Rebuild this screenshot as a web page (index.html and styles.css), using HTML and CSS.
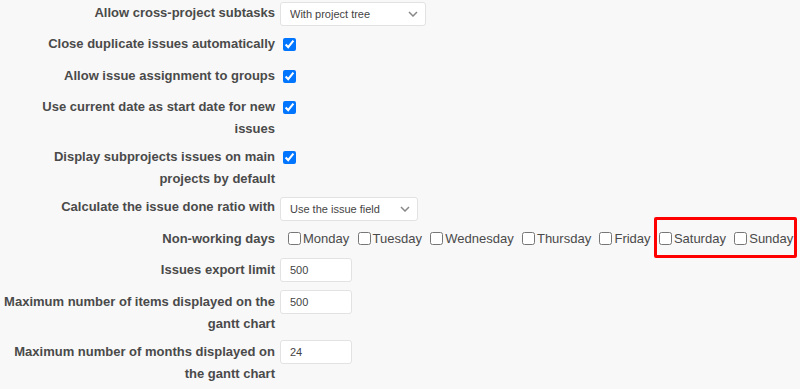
FILE: index.html
```html
<!DOCTYPE html>
<html>
<head>
<meta charset="utf-8">
<link rel="stylesheet" href="styles.css">
</head>
<body>
<div class="tabular">
  <div class="row">
    <label class="lbl">Allow cross-project subtasks</label>
    <div class="ctl"><span class="sel w146"><select><option>With project tree</option></select><svg class="chev" width="10" height="6" viewBox="0 0 10 6"><path d="M1 1l4 4 4-4" fill="none" stroke="#888" stroke-width="1.5"/></svg></span></div>
  </div>
  <div class="row">
    <label class="lbl">Close duplicate issues automatically</label>
    <div class="ctl"><input type="checkbox" class="cb" checked></div>
  </div>
  <div class="row">
    <label class="lbl">Allow issue assignment to groups</label>
    <div class="ctl"><input type="checkbox" class="cb" checked></div>
  </div>
  <div class="row">
    <label class="lbl">Use current date as start date for new issues</label>
    <div class="ctl"><input type="checkbox" class="cb" checked></div>
  </div>
  <div class="row">
    <label class="lbl">Display subprojects issues on main projects by default</label>
    <div class="ctl"><input type="checkbox" class="cb" checked></div>
  </div>
  <div class="row">
    <label class="lbl">Calculate the issue done ratio with</label>
    <div class="ctl"><span class="sel w138"><select><option>Use the issue field</option></select><svg class="chev" width="10" height="6" viewBox="0 0 10 6"><path d="M1 1l4 4 4-4" fill="none" stroke="#888" stroke-width="1.5"/></svg></span></div>
  </div>
  <div class="row">
    <label class="lbl">Non-working days</label>
    <div class="ctl days">
      <label class="day"><input type="checkbox">Monday</label>
      <label class="day"><input type="checkbox">Tuesday</label>
      <label class="day"><input type="checkbox">Wednesday</label>
      <label class="day"><input type="checkbox">Thursday</label>
      <label class="day"><input type="checkbox">Friday</label>
      <span class="hl">
        <label class="day"><input type="checkbox">Saturday</label>
        <label class="day last"><input type="checkbox">Sunday</label>
      </span>
    </div>
  </div>
  <div class="row">
    <label class="lbl">Issues export limit</label>
    <div class="ctl"><input type="text" class="txt" value="500"></div>
  </div>
  <div class="row">
    <label class="lbl">Maximum number of items displayed on the gantt chart</label>
    <div class="ctl"><input type="text" class="txt" value="500"></div>
  </div>
  <div class="row">
    <label class="lbl">Maximum number of months displayed on the gantt chart</label>
    <div class="ctl"><input type="text" class="txt" value="24"></div>
  </div>
</div>
</body>
</html>
```
FILE: styles.css
```css
html, body {
  margin: 0;
  padding: 0;
  background: #f8f8f8;
}
body {
  font-family: "Liberation Sans", Arial, sans-serif;
  font-size: 13px;
  color: #4a4a4a;
  overflow: hidden;
}
.tabular {
  margin-top: -1.5px;
}
.row {
  display: grid;
  grid-template-columns: 275px 1fr;
  column-gap: 5px;
  padding: 3px 0;
  min-height: 25.5px;
}
.lbl {
  font-weight: bold;
  text-align: right;
  line-height: 22px;
  padding-left: 4px;
}
.ctl {
  display: flex;
  align-items: flex-start;
}
.sel {
  position: relative;
  display: inline-block;
  margin-top: 0.5px;
}
.sel select {
  display: block;
  appearance: none;
  -webkit-appearance: none;
  height: 24px;
  box-sizing: border-box;
  border: 1px solid #e2e2e2;
  border-radius: 3px;
  background: #fff;
  font-family: "Liberation Sans", Arial, sans-serif;
  font-size: 11px;
  color: #444;
  padding: 0 0 0 9px;
  margin: 0;
  width: 100%;
}
.w146 { width: 146px; }
.w138 { width: 138px; }
.chev {
  position: absolute;
  right: 8px;
  top: 9px;
  pointer-events: none;
}
.cb {
  margin: 5px 0 0 3px;
  width: 13px;
  height: 13px;
}
.days {
  padding-left: 8px;
  align-items: center;
  height: 22px;
}
.day {
  display: inline-flex;
  align-items: center;
  line-height: 22px;
  margin-right: 8.3px;
}
.day input {
  margin: 0 2px 0 0;
  width: 13px;
  height: 13px;
}
.day.last { margin-right: 0; }
.hl {
  position: relative;
  display: inline-flex;
  align-items: center;
  padding-left: 2px;
  margin-left: -2px;
}
.hl::after {
  content: "";
  position: absolute;
  top: -11px;
  bottom: -8px;
  left: -3px;
  right: -4px;
  border: 3px solid #f00;
  border-radius: 2px;
  pointer-events: none;
}
.txt {
  display: block;
  margin: -1px 0 0;
  width: 72px;
  height: 24px;
  box-sizing: border-box;
  border: 1px solid #e2e2e2;
  border-radius: 3px;
  background: #fff;
  font-family: "Liberation Sans", Arial, sans-serif;
  font-size: 11px;
  color: #444;
  padding: 0 9px;
}
```
